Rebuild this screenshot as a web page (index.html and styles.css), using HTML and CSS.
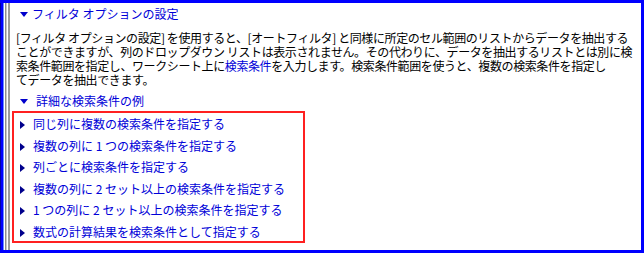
FILE: index.html
```html
<!DOCTYPE html>
<html>
  <head>
    <title>フィルタ オプションの設定</title>
    <meta charset="utf-8" />
    <link rel="stylesheet" href="styles.css">
  </head>
  <body>
    <div class="frame">
      <div class="edge"></div>
      <div class="content">
        <h3 class="toggle"><span class="down"></span>フィルタ オプションの設定</h3>
        <p class="body-text">
          [フィルタ オプションの設定] を使用すると、[オートフィルタ] と同様に所定のセル範囲のリストからデータを抽出する<br />
          ことができますが、列のドロップダウン リストは表示されません。その代わりに、データを抽出するリストとは別に検<br />
          索条件範囲を指定し、ワークシート上に<a href="#">検索条件</a>を入力します。検索条件範囲を使うと、複数の検索条件を指定し<br />
          てデータを抽出できます。
        </p>
        <h3 class="toggle sub"><span class="down"></span>詳細な検索条件の例</h3>
        <ul class="examples">
          <li><span class="right"></span>同じ列に複数の検索条件を指定する</li>
          <li><span class="right"></span>複数の列に 1 つの検索条件を指定する</li>
          <li><span class="right"></span>列ごとに検索条件を指定する</li>
          <li><span class="right"></span>複数の列に 2 セット以上の検索条件を指定する</li>
          <li><span class="right"></span>1 つの列に 2 セット以上の検索条件を指定する</li>
          <li><span class="right"></span>数式の計算結果を検索条件として指定する</li>
        </ul>
      </div>
    </div>
  </body>
</html>
```

FILE: styles.css
```css
html, body {
  margin: 0;
  background: white;
}

body {
  font: 12px/14px "Noto Sans CJK JP", "DejaVu Sans", sans-serif;
  color: black;
}

.frame {
  display: flex;
  width: 644px;
  height: 253px;
  box-sizing: border-box;
  border: 3px solid #0000ff;
  border-left: 0;
  background: white;
}

.edge {
  width: 10px;
  flex: none;
  background: linear-gradient(to right,
    #0000a8 0, #0000a8 1px,
    #0000ff 1px, #0000ff 3px,
    #6a8cff 3px, #6a8cff 4px,
    #ffffff 4px, #ffffff 5px,
    #8c8c8c 5px, #8c8c8c 6px,
    #c8c8c8 6px, #c8c8c8 7px,
    #ffffff 7px, #ffffff 8px,
    #9a9a9a 8px, #9a9a9a 10px);
}

.content {
  flex: 1;
  padding-top: 2px;
}

.toggle {
  margin: 0;
  font-size: 12px;
  font-weight: normal;
  color: #0000d8;
  padding-left: 10px;
  line-height: 18px;
  white-space: nowrap;
}

.toggle .down {
  display: inline-block;
  width: 0;
  height: 0;
  border-left: 4px solid transparent;
  border-right: 4px solid transparent;
  border-top: 5px solid #0000cc;
  margin-right: 4px;
  vertical-align: 2px;
}

.toggle.sub .down {
  margin-right: 8px;
}

.body-text {
  margin: 8px 0 5px 6px;
  line-height: 14px;
  white-space: nowrap;
  letter-spacing: -0.4px;
}

a {
  color: #0000d8;
  text-decoration: none;
}

.examples {
  list-style: none;
  margin: 1px 0 0 2px;
  padding: 0;
  width: 293px;
  height: 132px;
  box-sizing: border-box;
  border: 2px solid #ff2020;
}

.examples li {
  color: #0000d8;
  line-height: 21.5px;
  padding-left: 6px;
  white-space: nowrap;
}

.examples .right {
  display: inline-block;
  width: 0;
  height: 0;
  border-top: 4px solid transparent;
  border-bottom: 4px solid transparent;
  border-left: 5px solid #00008c;
  margin-right: 8px;
  vertical-align: 0;
}
```
